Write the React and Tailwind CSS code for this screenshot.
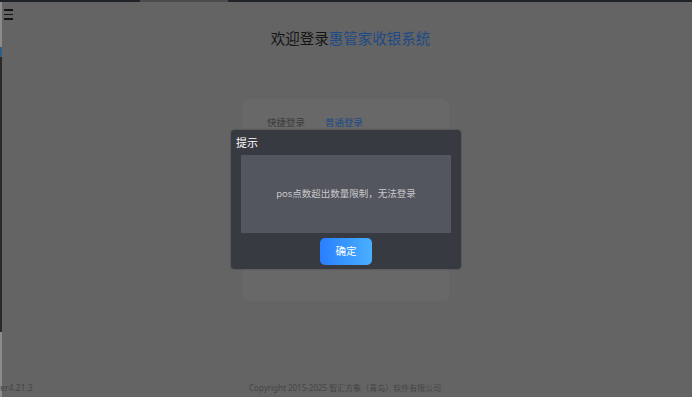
import React from "react";

const cjk = { fontFamily: '"Noto Sans", "Noto Sans CJK SC", sans-serif' };

function Menu() {
  return (
    <div className="flex flex-col gap-[3px] pt-[7px] pl-[2px]">
      <span className="block h-[1.5px] w-[9px] bg-[#141414]" />
      <span className="block h-[1.5px] w-[9px] bg-[#141414]" />
      <span className="block h-[1.5px] w-[9px] bg-[#141414]" />
    </div>
  );
}

export default function App() {
  return (
    <div
      className="relative h-[397px] w-[692px] overflow-hidden bg-[#646464] flex flex-col"
      style={cjk}
    >
      {/* top strip */}
      <div className="flex h-[2px] w-full">
        <div className="w-[140px] bg-[#1f2226]" />
        <div className="w-[88px] bg-[#4c4c4c]" />
        <div className="flex-1 bg-[#1f2226]" />
      </div>

      <div className="flex flex-1">
        {/* left edge */}
        <div className="flex w-[2px] flex-col">
          <div className="h-[45px] bg-[#8c8c8c]" />
          <div className="h-[10px] bg-[#2d5f86]" />
          <div className="h-[275px] bg-[#2a2a2a]" />
          <div className="flex-1 bg-[#8c8c8c]" />
        </div>

        <div className="relative flex flex-1 flex-col">
          <div className="absolute left-0 top-0">
            <Menu />
          </div>

          <h1 className="mt-[26px] pl-[7px] text-center text-[14.5px] leading-[20px] text-[#141414]">
            欢迎登录<span className="text-[#1d4a86]">惠管家收银系统</span>
          </h1>

          {/* login card */}
          <div className="ml-[240px] mt-[51px] h-[202px] w-[207px] rounded-[6px] bg-[#686868]">
            <div className="flex gap-[20px] pl-[25px] pt-[17px] text-[9.5px] leading-[14px]">
              <span className="text-[#3a3a3a]">快捷登录</span>
              <span className="text-[#1d4a86]">普通登录</span>
            </div>
          </div>

          <div className="mt-auto flex items-end pb-[3px] text-[8.5px] leading-[12px] text-[#444]">
            <span className="-ml-[6px] w-[200px]">ver4.21.3</span>
            <span className="ml-[53px] text-[8px]">
              Copyright 2015-2025 智汇方象（青岛）软件有限公司
            </span>
          </div>
        </div>
      </div>

      {/* modal dialog */}
      <div className="absolute left-[231px] top-[130px] w-[230px] rounded-[4px] bg-[#373a41] px-[10px] pb-[4px] shadow-[0_0_2px_rgba(0,0,0,0.4)]">
        <div className="-ml-[5px] pt-[6px] pb-[5px] text-[11px] leading-[14px] text-white">
          提示
        </div>
        <div className="flex h-[78px] items-center justify-center bg-[#53555f] text-[9.5px] text-[#c9c9c9]">
          pos点数超出数量限制，无法登录
        </div>
        <div className="flex justify-center pt-[5px]">
          <button
            type="button"
            className="h-[27px] w-[52px] rounded-[5px] bg-gradient-to-r from-[#2a7eff] to-[#4aafff] text-[10.5px] text-white"
          >
            确定
          </button>
        </div>
      </div>
    </div>
  );
}
